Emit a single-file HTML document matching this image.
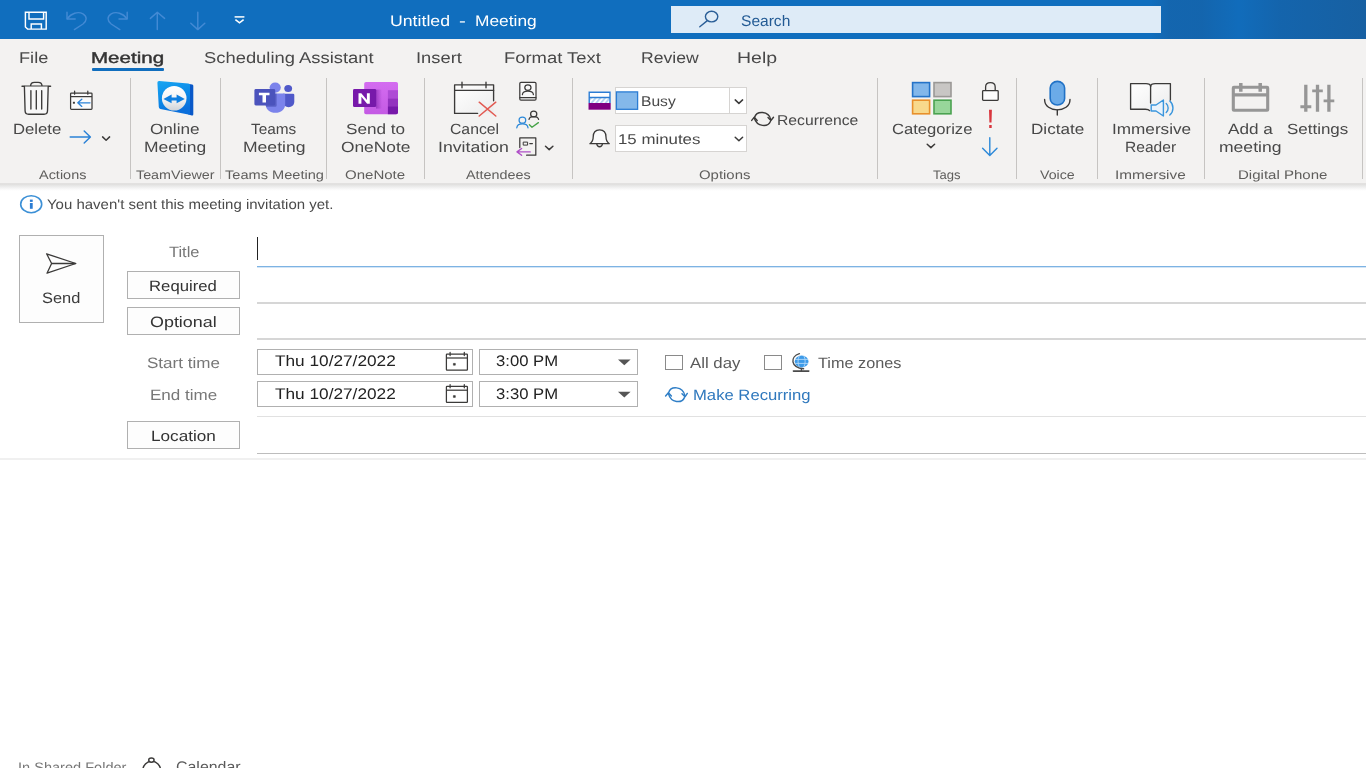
<!DOCTYPE html>
<html><head><meta charset="utf-8"><title>Untitled - Meeting</title>
<style>
html,body{margin:0;padding:0;background:#ffffff;}
body{width:1366px;height:768px;overflow:hidden;font-family:"Liberation Sans",sans-serif;}
#app{position:relative;width:1366px;height:768px;overflow:hidden;background:#ffffff;}
.t{position:absolute;white-space:pre;transform-origin:0 0;text-rendering:geometricPrecision;}
.b{position:absolute;box-sizing:border-box;}
.sep{position:absolute;width:1px;top:78px;height:101px;background:#c6c4c2;}
.btn{position:absolute;box-sizing:border-box;border:1px solid #b0b0b0;background:#fdfdfd;}
.ln{position:absolute;height:1px;}
#txt{position:absolute;left:0;top:0;width:1366px;height:768px;will-change:transform;}

</style></head>
<body>
<div id="app">
<!-- title bar -->
<div class="b" style="left:0;top:0;width:1366px;height:39px;background:#106ebe;"></div>
<div class="b" style="left:1150px;top:0;width:216px;height:39px;background:linear-gradient(90deg,rgba(21,98,168,0) 0%,rgba(21,98,168,0.7) 9%,rgba(21,98,168,0.75) 24%,rgba(19,104,180,0.3) 41%,rgba(21,98,168,0.8) 60%,rgba(23,96,162,1) 100%);"></div>
<div class="b" style="left:671px;top:6px;width:490px;height:27px;background:#deebf7;"></div>
<!-- ribbon bg -->
<div class="b" style="left:0;top:39px;width:1366px;height:144px;background:#f3f2f1;"></div>
<div class="b" style="left:0;top:183px;width:1366px;height:8px;background:linear-gradient(180deg,#e4e3e2 0%,#dfdedd 14%,#e6e6e5 30%,#f0f0f0 55%,#fafafa 80%,#ffffff 100%);"></div>
<!-- active tab underline -->
<div class="b" style="left:92px;top:68px;width:72px;height:3px;background:#106ebe;border-radius:1px;"></div>
<!-- group separators -->
<div class="sep" style="left:130px"></div>
<div class="sep" style="left:220px"></div>
<div class="sep" style="left:326px"></div>
<div class="sep" style="left:424px"></div>
<div class="sep" style="left:572px"></div>
<div class="sep" style="left:877px"></div>
<div class="sep" style="left:1016px"></div>
<div class="sep" style="left:1097px"></div>
<div class="sep" style="left:1204px"></div>
<div class="sep" style="left:1362px"></div>
<!-- combos -->
<div class="b" style="left:615px;top:87px;width:132px;height:27px;background:#ffffff;border:1px solid #d6d4d2;"></div>
<div class="b" style="left:729px;top:88px;width:1px;height:25px;background:#d6d4d2;"></div>
<div class="b" style="left:615px;top:125px;width:132px;height:27px;background:#ffffff;border:1px solid #d6d4d2;"></div>
<!-- form -->
<div class="btn" style="left:19px;top:235px;width:85px;height:88px;"></div>
<div class="btn" style="left:127px;top:271px;width:113px;height:28px;"></div>
<div class="btn" style="left:127px;top:307px;width:113px;height:28px;"></div>
<div class="btn" style="left:127px;top:421px;width:113px;height:28px;"></div>
<div class="b" style="left:257px;top:237px;width:1px;height:23px;background:#222;"></div>
<div class="ln" style="left:257px;top:266px;width:1109px;height:2px;background:linear-gradient(180deg,#7db3e3 0,#7db3e3 50%,#d3e5f6 50%,#d3e5f6 100%);"></div>
<div class="ln" style="left:257px;top:302px;width:1109px;height:2px;background:#d6d6d6;"></div>
<div class="ln" style="left:257px;top:338px;width:1109px;height:2px;background:#d6d6d6;"></div>
<div class="ln" style="left:257px;top:416px;width:1109px;background:#e1e1e1;"></div>
<div class="ln" style="left:257px;top:453px;width:1109px;background:#bdbdbd;"></div>
<div class="ln" style="left:0px;top:458px;width:1366px;height:2px;background:#f0f0f0;"></div>
<div class="btn" style="left:257px;top:349px;width:216px;height:26px;background:#fff;"></div>
<div class="btn" style="left:479px;top:349px;width:159px;height:26px;background:#fff;"></div>
<div class="btn" style="left:257px;top:381px;width:216px;height:26px;background:#fff;"></div>
<div class="btn" style="left:479px;top:381px;width:159px;height:26px;background:#fff;"></div>
<div class="b" style="left:665px;top:355px;width:18px;height:15px;background:#fff;border:1px solid #8a8a8a;"></div>
<div class="b" style="left:764px;top:355px;width:18px;height:15px;background:#fff;border:1px solid #8a8a8a;"></div>

<svg class="b" style="left:0;top:0" width="1366" height="768" viewBox="0 0 1366 768" fill="none">
<!-- ===== title bar ===== -->
<g stroke="#ffffff" stroke-width="1.45" stroke-linejoin="miter" stroke-linecap="butt">
  <!-- save -->
  <path d="M25.4 12.3 H46.2 V29.1 H27.6 L25.4 27 Z"/>
  <path d="M29 12.3 V19 H43.6 V12.3"/>
  <path d="M31.2 29.1 V24 H41.4 V29.1"/>
  <!-- customize QAT -->
  <path d="M234.6 16.9 H244.4" stroke-width="1.5"/>
  <path d="M235.4 19.6 L239.5 22.8 L243.6 19.6" stroke-width="1.6"/>
</g>
<g stroke="#438ad4" stroke-width="1.45" stroke-linecap="round" stroke-linejoin="round">
  <!-- undo -->
  <path d="M67 12.2 V18.9 H75.2"/>
  <path d="M67.5 18.5 C71 13.2 78 11.2 83 13.8 C87.4 16.4 87 21 83 24 L74.4 29.6"/>
  <!-- redo -->
  <path d="M127.2 12.2 V18.9 H119"/>
  <path d="M126.7 18.5 C123.2 13.2 116.2 11.2 111.2 13.8 C106.8 16.4 107.2 21 111.2 24 L119.8 29.6"/>
  <!-- up -->
  <path d="M157.3 29.6 V12.4 M150.4 18.4 L157.3 12.2 L164.6 18.4"/>
  <!-- down -->
  <path d="M197.8 12.2 V29.4 M190.8 23.2 L197.8 29.6 L204.8 23.2"/>
</g>
<!-- search icon -->
<g stroke="#2a5e97" stroke-width="1.4" stroke-linecap="round">
  <ellipse cx="711.6" cy="16.6" rx="6.2" ry="5.3"/>
  <path d="M707 20.9 L699.8 26.8"/>
</g>

<defs>
  <linearGradient id="tvg" x1="0" y1="0" x2="0.3" y2="1"><stop offset="0" stop-color="#18a6f2"/><stop offset="0.55" stop-color="#0c8ae8"/><stop offset="1" stop-color="#0a6fdc"/></linearGradient>
  <linearGradient id="tvc" x1="0" y1="0" x2="0" y2="1"><stop offset="0" stop-color="#ffffff"/><stop offset="0.55" stop-color="#f4f4f4"/><stop offset="1" stop-color="#cfd3d8"/></linearGradient>
  <linearGradient id="calg" x1="0" y1="0" x2="1" y2="1"><stop offset="0" stop-color="#ffffff"/><stop offset="1" stop-color="#ececec"/></linearGradient>
  <linearGradient id="ong" x1="0" y1="0" x2="0" y2="1"><stop offset="0" stop-color="#d46cf0"/><stop offset="1" stop-color="#c45ae4"/></linearGradient>
  <linearGradient id="onsh" x1="0" y1="0" x2="1" y2="0"><stop offset="0" stop-color="#7a1fa8" stop-opacity="0.55"/><stop offset="1" stop-color="#7a1fa8" stop-opacity="0"/></linearGradient>
  <pattern id="hatch" width="3.6" height="3.6" patternUnits="userSpaceOnUse" patternTransform="rotate(40)"><rect width="3.6" height="3.6" fill="#ffffff"/><rect width="1.9" height="3.6" fill="#b5d4f2"/></pattern>
</defs>
<!-- ===== Actions ===== -->
<g stroke="#3b3a39" stroke-width="1.35" stroke-linecap="round" stroke-linejoin="round">
  <path d="M22 86.2 H50.6"/>
  <path d="M30.6 86 C30.6 83.4 32 82.4 34.4 82.4 H38.2 C40.6 82.4 42 83.4 42 86"/>
  <path d="M24.4 86.4 L25.1 111 C25.2 113.2 26.4 114.2 28.6 114.2 H44 C46.2 114.2 47.4 113.2 47.5 111 L48.2 86.4" fill="#f7f7f7"/>
  <path d="M30.9 90.6 V109 M36.3 90.6 V109 M41.7 90.6 V109"/>
</g>
<g stroke="#3b3a39" stroke-width="1.25" stroke-linejoin="round">
  <rect x="70.6" y="93" width="21.4" height="16.4" rx="0.8" fill="#fafafa"/>
  <path d="M70.6 96.6 H92"/>
  <path d="M74.6 91 V94.2 M87.8 91 V94.2" stroke-linecap="round"/>
</g>
<rect x="72.9" y="101.8" width="2" height="1.9" fill="#3b3a39"/>
<g stroke="#2b82d6" stroke-width="1.35" stroke-linecap="round" stroke-linejoin="round">
  <path d="M90 102.8 H78 M81.8 99.2 L77.8 102.8 L81.8 106.4"/>
  <path d="M70.2 137 H90.2 M84.2 131 L90.4 137 L84.2 143" stroke-width="1.45"/>
</g>
<path d="M102.6 136.9 L106.1 140.2 L109.6 136.9" stroke="#3b3a39" stroke-width="1.5" stroke-linecap="round" stroke-linejoin="round"/>
<!-- ===== TeamViewer ===== -->
<path d="M189.2 84 L192.2 84.4 Q193.3 84.6 193.3 85.8 V114.2 Q193.3 115.8 191.8 115.4 L188.4 114.6 Z" fill="#0858c8"/>
<path d="M159.2 81 L188.2 83.5 Q190 83.7 190 85.4 V113.2 Q190 115 188.3 114.6 L160.4 108.9 Q158.9 108.6 158.8 107 L157.4 82.8 Q157.3 80.9 159.2 81 Z" fill="url(#tvg)"/>
<ellipse cx="174.2" cy="98.3" rx="12.3" ry="12.3" fill="url(#tvc)"/>
<path d="M163.4 98.9 L171.6 94.6 V97.5 H176.6 V94.6 L184.8 98.9 L176.6 103.2 V100.4 H171.6 V103.2 Z" fill="#0f7fe0"/>
<!-- ===== Teams ===== -->
<ellipse cx="288.2" cy="88.4" rx="3.9" ry="3.5" fill="#5059c9"/>
<path d="M283 93.8 H293 Q294.3 93.8 294.3 95.1 V101.6 C294.3 105.2 291.6 107.3 288.6 107.3 C285.6 107.3 283 105.2 283 101.6 Z" fill="#5059c9"/>
<ellipse cx="275.2" cy="87.6" rx="5.6" ry="5.1" fill="#7b83eb"/>
<path d="M265.6 93.4 H283.8 Q285.2 93.4 285.2 94.8 V104 C285.2 109.4 280.8 112.8 275.4 112.8 C270 112.8 265.6 109.4 265.6 104 Z" fill="#7b83eb"/>
<path d="M265.6 93.4 H276.6 V105.4 Q276.6 106.8 275.2 106.8 H266.2 Q265.6 105.6 265.6 104 Z" fill="#3e46a8" opacity="0.55"/>
<rect x="254.4" y="89" width="20.8" height="16.4" rx="1.4" fill="#4b53bc"/>
<path d="M258.9 92.7 H269.5 V95.3 H266 V102.4 H262.5 V95.3 H258.9 Z" fill="#ffffff"/>
<!-- ===== OneNote ===== -->
<rect x="364.2" y="82" width="33.8" height="32.2" rx="1.8" fill="url(#ong)"/>
<rect x="387.9" y="90.2" width="10.1" height="8.2" fill="#ae4bd5"/>
<rect x="387.9" y="98.4" width="10.1" height="7.9" fill="#9332bf"/>
<path d="M387.9 106.3 H398 V112.4 Q398 114.2 396.2 114.2 H387.9 Z" fill="#7719aa"/>
<rect x="376" y="89.6" width="6" height="19" fill="url(#onsh)"/>
<rect x="353" y="89.1" width="23.2" height="18" rx="1.4" fill="#7719aa"/>
<path d="M358.5 103.7 V93.2 H361.3 L366.9 100.1 V93.2 H369.8 V103.7 H367.1 L361.4 96.7 V103.7 Z" fill="#ffffff"/>
<!-- ===== Attendees ===== -->
<path d="M454.6 84.8 H493.6 V113.4 H454.6 Z" fill="url(#calg)"/>
<g stroke="#3b3a39" stroke-width="1.35" stroke-linecap="round" stroke-linejoin="round">
  <path d="M477.6 113.4 H454.6 V84.8 H493.6 V100.8"/>
  <path d="M454.6 90.4 H493.6"/>
  <path d="M462 82.2 V87.8 M486 82.2 V87.8"/>
</g>
<path d="M479.2 102.2 L495.8 116 M495.8 102.2 L479.2 116" stroke="#e25a52" stroke-width="1.5" stroke-linecap="round"/>
<g stroke="#3b3a39" stroke-width="1.25" stroke-linecap="round" stroke-linejoin="round">
  <!-- address book -->
  <rect x="519.8" y="82.4" width="16.2" height="17.8" rx="1.2" fill="#f8f8f8"/>
  <path d="M519.9 97.5 H535.9"/>
  <ellipse cx="527.9" cy="87.6" rx="3.1" ry="2.8"/>
  <path d="M522.4 94.6 C522.8 90 533 90 533.4 94.6"/>
  <!-- check names dark person -->
  <ellipse cx="533.7" cy="114" rx="3.1" ry="2.9"/>
  <path d="M529 119.4 C529.6 115.6 537.8 115.6 538.6 119.4"/>
  <!-- response options -->
  <path d="M519.8 147.6 V137.9 H535.8 V155.2 H526.6"/>
  <rect x="523.6" y="142.1" width="4" height="3" stroke-width="1"/>
  <path d="M529.8 143.6 H532.4"/>
</g>
<g stroke="#2b88d8" stroke-width="1.3" stroke-linecap="round">
  <ellipse cx="522.4" cy="120.2" rx="3.3" ry="3"/>
  <path d="M516.8 127.8 C517.4 122.6 527.4 122.6 528 127.8"/>
</g>
<path d="M529.4 124.8 L532 127.2 L538.4 122.6" stroke="#45a347" stroke-width="1.35" stroke-linecap="round" stroke-linejoin="round"/>
<path d="M530.2 151.9 H517.2 M521.6 148.5 L517 151.9 L521.6 155.3" stroke="#b050c8" stroke-width="1.4" stroke-linecap="round" stroke-linejoin="round"/>
<path d="M545.5 146.3 L549.2 149.6 L552.9 146.3" stroke="#3b3a39" stroke-width="1.5" stroke-linecap="round" stroke-linejoin="round"/>
<!-- ===== Options ===== -->
<rect x="588.5" y="91.6" width="22.2" height="18" fill="#ffffff"/>
<rect x="589.2" y="97.6" width="20.8" height="5.4" fill="url(#hatch)"/>
<rect x="588.5" y="103" width="22.2" height="6.7" fill="#800080"/>
<path d="M589.2 103 V92.3 H610 V103 M589.2 97.5 H610" stroke="#2b7cd3" stroke-width="1.4"/>
<rect x="616.4" y="91.9" width="21.2" height="17.4" fill="#84b8ea" stroke="#2b7cd3" stroke-width="1.3"/>
<g stroke="#3b3a39" stroke-width="1.3" stroke-linecap="round" stroke-linejoin="round">
  <path d="M589.9 143.7 C592.4 142 593.2 140.4 593.2 137 C593.2 132.4 595.6 129.8 599.6 129.8 C603.6 129.8 606 132.4 606 137 C606 140.4 606.8 142 609.3 143.7 Z" fill="#fafafa"/>
  <path d="M596.8 144.2 C597.4 147.6 601.8 147.6 602.4 144.2"/>
  <!-- combo chevrons -->
  <path d="M735.2 99.9 L738.9 103.4 L742.6 99.9" stroke-width="1.5"/>
  <path d="M735.2 137.2 L738.9 140.7 L742.6 137.2" stroke-width="1.5"/>
</g>

<!-- ===== Recurrence ===== -->
<g stroke="#3b3a39" stroke-width="1.4" stroke-linecap="round" stroke-linejoin="round">
  <path d="M754.6 117.3 C756.6 110.6 768.6 110.6 770.8 119.6"/>
  <path d="M768 117.6 L770.9 120.5 L773.5 117.3"/>
  <path d="M770.4 121.5 C768 127.3 757 127.3 754.3 118"/>
  <path d="M751.7 120.4 L754.3 117.3 L757.2 120.4"/>
</g>
<!-- ===== Tags ===== -->
<rect x="912.6" y="82.6" width="17" height="14" fill="#83b7ea" stroke="#2573c8" stroke-width="1.6"/>
<rect x="934" y="82.6" width="17" height="14" fill="#c8c6c4" stroke="#9a9896" stroke-width="1.6"/>
<rect x="912.6" y="100.2" width="17" height="13.6" fill="#f8d98c" stroke="#e8902c" stroke-width="1.6"/>
<rect x="934" y="100.2" width="17" height="13.6" fill="#98d69a" stroke="#4aa250" stroke-width="1.6"/>
<path d="M927.2 144.3 L930.9 147.6 L934.6 144.3" stroke="#3b3a39" stroke-width="1.5" stroke-linecap="round" stroke-linejoin="round"/>
<g stroke="#3b3a39" stroke-width="1.3" stroke-linejoin="round">
  <path d="M985.6 90.4 V87 C985.6 83.8 987.6 82.6 990.4 82.6 C993.2 82.6 995.2 83.8 995.2 87 V90.4"/>
  <rect x="982.6" y="90.6" width="15.6" height="9.8" rx="0.8" fill="#fdfdfd"/>
</g>
<path d="M989 109.8 H991.9 L991.5 122.4 H989.4 Z" fill="#d9363e"/>
<rect x="989.2" y="125" width="2.5" height="3" fill="#d9363e"/>
<path d="M989.8 137.8 V155.2 M982.6 148.2 L989.8 155.4 L997 148.2" stroke="#2b88d8" stroke-width="1.4" stroke-linecap="round" stroke-linejoin="round"/>
<!-- ===== Voice ===== -->
<rect x="1050.2" y="81.4" width="14.4" height="23.6" rx="7.2" ry="6.6" fill="#6babe8" stroke="#2172c6" stroke-width="1.6"/>
<g stroke="#3b3a39" stroke-width="1.4" stroke-linecap="round">
  <path d="M1044.6 99.4 C1044.6 113.4 1070 113.4 1070 99.4"/>
  <path d="M1057.3 110 V115"/>
</g>
<!-- ===== Immersive reader ===== -->
<path d="M1130.6 83.6 H1146 C1148.6 83.6 1150.4 84.6 1150.6 86.2 C1150.8 84.6 1152.6 83.6 1155.2 83.6 H1170.4 V109.2 H1154 C1152 109.2 1150.8 110 1150.6 111 C1150.2 110 1149 109.2 1147 109.2 H1130.6 Z" fill="url(#calg)"/>
<g stroke="#3b3a39" stroke-width="1.35" stroke-linecap="round" stroke-linejoin="round">
  <path d="M1150.6 86.2 C1150.4 84.6 1148.6 83.6 1146 83.6 H1130.6 V109.2 H1145.4 C1147.6 109.2 1149 109.8 1149.6 110.6"/>
  <path d="M1150.6 86.2 C1150.8 84.6 1152.6 83.6 1155.2 83.6 H1170.4 V100"/>
  <path d="M1150.6 86.4 V103"/>
</g>
<g stroke="#3a96dd" stroke-width="1.4" stroke-linecap="round" stroke-linejoin="round">
  <path d="M1151.2 105 H1156 L1163.4 100 V116 L1156 111 H1151.2 Z" fill="#e9f3fc"/>
  <path d="M1166.2 103.4 C1168.8 105.8 1168.8 110.2 1166.2 112.6"/>
  <path d="M1169.8 101 C1174 104.6 1174 111.4 1169.8 115"/>
</g>
<!-- ===== Digital phone ===== -->
<g stroke="#969696" stroke-width="3.1" stroke-linejoin="round">
  <rect x="1233.3" y="87.3" width="34.4" height="23" rx="0.6"/>
  <path d="M1233.3 94.9 H1267.7"/>
  <path d="M1240.8 83 V91.8 M1260.2 83 V91.8" stroke-linecap="butt" stroke-width="3.5"/>
  <path d="M1305.8 84.8 V111.8 M1317.5 84.8 V111.8 M1328.9 84.8 V111.8" stroke-width="3.3"/>
  <path d="M1300.4 106.8 H1311.3 M1312.2 90.9 H1322.8 M1323.6 100.9 H1334.3" stroke-width="2.9"/>
</g>
<!-- ===== Form ===== -->
<ellipse cx="31.2" cy="204.2" rx="10.5" ry="8.5" stroke="#3c90d6" stroke-width="1.6"/>
<rect x="29.9" y="199.6" width="2.8" height="2.3" fill="#2b7cd3"/>
<rect x="29.9" y="203" width="2.8" height="5.8" fill="#2b7cd3"/>
<g stroke="#3b3a39" stroke-width="1.3" stroke-linejoin="round" stroke-linecap="round">
  <path d="M46.6 253.8 L75.8 263.5 L47 273.2 L51.6 263.5 Z"/>
  <path d="M51.6 263.5 H75.4"/>
</g>
<!-- date calendars -->
<g id="dcal" stroke="#3b3a39" stroke-width="1.25" stroke-linejoin="round">
  <rect x="446.4" y="354.2" width="21" height="16" rx="0.6"/>
  <path d="M446.4 358 H467.4"/>
  <path d="M450.1 352.4 V355.6 M464.3 352.4 V355.6" stroke-linecap="round"/>
  <rect x="453.4" y="363.4" width="1.9" height="1.8" fill="#3b3a39" stroke-width="0.6"/>
</g>
<g transform="translate(0 32.2)" stroke="#3b3a39" stroke-width="1.25" stroke-linejoin="round">
  <rect x="446.4" y="354.2" width="21" height="16" rx="0.6"/>
  <path d="M446.4 358 H467.4"/>
  <path d="M450.1 352.4 V355.6 M464.3 352.4 V355.6" stroke-linecap="round"/>
  <rect x="453.4" y="363.4" width="1.9" height="1.8" fill="#3b3a39" stroke-width="0.6"/>
</g>
<path d="M618 359.6 H630.6 L624.3 365.2 Z" fill="#555555"/>
<path d="M618 391.8 H630.6 L624.3 397.4 Z" fill="#555555"/>
<!-- globe -->
<ellipse cx="801.6" cy="361.4" rx="6.9" ry="6" fill="#3d9be9"/>
<g stroke="#bfe0fa" stroke-width="0.9" opacity="0.9">
  <path d="M795 359.4 H808.2 M795 363.4 H808.2"/>
  <path d="M799.4 355.6 C797.6 359 797.6 363.8 799.4 367.2 M803.8 355.6 C805.6 359 805.6 363.8 803.8 367.2"/>
</g>
<g stroke="#4a4a4a" stroke-width="1.4" stroke-linecap="round">
  <path d="M799.4 353.6 C789.8 356.6 790.4 367.6 803.6 368.8"/>
  <path d="M801.4 368.8 V370.8"/>
  <path d="M793.4 371.1 H808.8" stroke-width="1.6"/>
</g>
<!-- make recurring -->
<g stroke="#2f7ec6" stroke-width="1.45" stroke-linecap="round" stroke-linejoin="round">
  <path d="M668.6 392.6 C670.8 385.8 682.6 385.8 685 395.8"/>
  <path d="M682 393.8 L685 396.8 L687.3 393.4"/>
  <path d="M684.4 397.6 C682 403.4 671 403.4 668.4 393.6"/>
  <path d="M665.6 396 L668.4 392.7 L671.4 396"/>
</g>
<!-- bottom person icon -->
<g stroke="#3b3a39" stroke-width="1.4">
  <ellipse cx="151.7" cy="770.5" rx="8.9" ry="9.2"/>
  <ellipse cx="151.4" cy="760.1" rx="2.7" ry="2.1" fill="#ffffff"/>
</g>
</svg>

<div id="txt">
<div class="t" style="left:389.56px;top:14px;font-size:15.36px;line-height:15.36px;color:#ffffff;transform:scaleX(1.1518);">Untitled</div>
<div class="t" style="left:459.00px;top:14px;font-size:15.36px;line-height:15.36px;color:#ffffff;transform:scaleX(1.3333);">-</div>
<div class="t" style="left:474.59px;top:14px;font-size:15.36px;line-height:15.36px;color:#ffffff;transform:scaleX(1.1295);">Meeting</div>
<div class="t" style="left:740.94px;top:14px;font-size:15.36px;line-height:15.36px;color:#225a94;transform:scaleX(1.0128);">Search</div>
<div class="t" style="left:19.25px;top:51px;font-size:15.65px;line-height:15.65px;color:#484848;transform:scaleX(1.1613);">File</div>
<div class="t" style="left:91.39px;top:51px;font-size:15.65px;line-height:15.65px;color:#333333;transform:scaleX(1.3135);-webkit-text-stroke:0.4px #333333;">Meeting</div>
<div class="t" style="left:203.82px;top:51px;font-size:15.65px;line-height:15.65px;color:#484848;transform:scaleX(1.1749);">Scheduling Assistant</div>
<div class="t" style="left:415.94px;top:51px;font-size:15.65px;line-height:15.65px;color:#484848;transform:scaleX(1.1733);">Insert</div>
<div class="t" style="left:503.53px;top:51px;font-size:15.65px;line-height:15.65px;color:#484848;transform:scaleX(1.1765);">Format Text</div>
<div class="t" style="left:640.59px;top:51px;font-size:15.65px;line-height:15.65px;color:#484848;transform:scaleX(1.1260);">Review</div>
<div class="t" style="left:737.44px;top:51px;font-size:15.65px;line-height:15.65px;color:#484848;transform:scaleX(1.2463);">Help</div>
<div class="t" style="left:12.79px;top:123px;font-size:14.78px;line-height:14.78px;color:#484848;transform:scaleX(1.1313);">Delete</div>
<div class="t" style="left:150.43px;top:123px;font-size:14.78px;line-height:14.78px;color:#484848;transform:scaleX(1.1612);">Online</div>
<div class="t" style="left:143.82px;top:141px;font-size:14.78px;line-height:14.78px;color:#484848;transform:scaleX(1.1821);">Meeting</div>
<div class="t" style="left:251.24px;top:123px;font-size:14.78px;line-height:14.78px;color:#484848;transform:scaleX(1.0409);">Teams</div>
<div class="t" style="left:242.51px;top:141px;font-size:14.78px;line-height:14.78px;color:#484848;transform:scaleX(1.1881);">Meeting</div>
<div class="t" style="left:345.63px;top:123px;font-size:14.78px;line-height:14.78px;color:#484848;transform:scaleX(1.1616);">Send to</div>
<div class="t" style="left:340.62px;top:141px;font-size:14.78px;line-height:14.78px;color:#484848;transform:scaleX(1.1740);">OneNote</div>
<div class="t" style="left:450.00px;top:123px;font-size:14.78px;line-height:14.78px;color:#484848;transform:scaleX(1.0667);">Cancel</div>
<div class="t" style="left:438.20px;top:141px;font-size:14.78px;line-height:14.78px;color:#484848;transform:scaleX(1.1982);">Invitation</div>
<div class="t" style="left:641.12px;top:95px;font-size:14.20px;line-height:14.20px;color:#484848;transform:scaleX(1.1008);">Busy</div>
<div class="t" style="left:618.11px;top:133px;font-size:14.20px;line-height:14.20px;color:#484848;transform:scaleX(1.1868);">15 minutes</div>
<div class="t" style="left:776.92px;top:114px;font-size:14.20px;line-height:14.20px;color:#484848;transform:scaleX(1.1077);">Recurrence</div>
<div class="t" style="left:891.66px;top:123px;font-size:14.78px;line-height:14.78px;color:#484848;transform:scaleX(1.1257);">Categorize</div>
<div class="t" style="left:1030.65px;top:123px;font-size:14.78px;line-height:14.78px;color:#484848;transform:scaleX(1.1568);">Dictate</div>
<div class="t" style="left:1111.55px;top:123px;font-size:14.78px;line-height:14.78px;color:#484848;transform:scaleX(1.1623);">Immersive</div>
<div class="t" style="left:1125.38px;top:141px;font-size:14.78px;line-height:14.78px;color:#484848;transform:scaleX(1.0553);">Reader</div>
<div class="t" style="left:1228.00px;top:123px;font-size:14.78px;line-height:14.78px;color:#484848;transform:scaleX(1.1610);">Add a</div>
<div class="t" style="left:1218.51px;top:141px;font-size:14.78px;line-height:14.78px;color:#484848;transform:scaleX(1.1881);">meeting</div>
<div class="t" style="left:1286.64px;top:123px;font-size:14.78px;line-height:14.78px;color:#484848;transform:scaleX(1.1481);">Settings</div>
<div class="t" style="left:39.20px;top:169px;font-size:12.46px;line-height:12.46px;color:#5f5e5c;transform:scaleX(1.1605);">Actions</div>
<div class="t" style="left:135.51px;top:169px;font-size:12.46px;line-height:12.46px;color:#5f5e5c;transform:scaleX(1.1498);">TeamViewer</div>
<div class="t" style="left:224.51px;top:169px;font-size:12.46px;line-height:12.46px;color:#5f5e5c;transform:scaleX(1.1712);">Teams Meeting</div>
<div class="t" style="left:345.10px;top:169px;font-size:12.46px;line-height:12.46px;color:#5f5e5c;transform:scaleX(1.2062);">OneNote</div>
<div class="t" style="left:465.80px;top:169px;font-size:12.46px;line-height:12.46px;color:#5f5e5c;transform:scaleX(1.1516);">Attendees</div>
<div class="t" style="left:699.10px;top:169px;font-size:12.46px;line-height:12.46px;color:#5f5e5c;transform:scaleX(1.1976);">Options</div>
<div class="t" style="left:933.04px;top:169px;font-size:12.46px;line-height:12.46px;color:#5f5e5c;transform:scaleX(1.0471);">Tags</div>
<div class="t" style="left:1040.00px;top:169px;font-size:12.46px;line-height:12.46px;color:#5f5e5c;transform:scaleX(1.1400);">Voice</div>
<div class="t" style="left:1115.16px;top:169px;font-size:12.46px;line-height:12.46px;color:#5f5e5c;transform:scaleX(1.2306);">Immersive</div>
<div class="t" style="left:1238.49px;top:169px;font-size:12.46px;line-height:12.46px;color:#5f5e5c;transform:scaleX(1.2069);">Digital Phone</div>
<div class="t" style="left:47.46px;top:198px;font-size:13.91px;line-height:13.91px;color:#4a4a4a;transform:scaleX(1.0777);">You haven&#x27;t sent this meeting invitation yet.</div>
<div class="t" style="left:42.18px;top:291px;font-size:15.07px;line-height:15.07px;color:#3a3a3a;transform:scaleX(1.0896);">Send</div>
<div class="t" style="left:168.53px;top:245px;font-size:15.07px;line-height:15.07px;color:#777777;transform:scaleX(1.0926);">Title</div>
<div class="t" style="left:148.61px;top:279px;font-size:15.07px;line-height:15.07px;color:#333333;transform:scaleX(1.1102);">Required</div>
<div class="t" style="left:149.61px;top:315px;font-size:15.07px;line-height:15.07px;color:#333333;transform:scaleX(1.1889);">Optional</div>
<div class="t" style="left:147.15px;top:356px;font-size:15.07px;line-height:15.07px;color:#777777;transform:scaleX(1.1317);">Start time</div>
<div class="t" style="left:149.89px;top:388px;font-size:15.07px;line-height:15.07px;color:#777777;transform:scaleX(1.1304);">End time</div>
<div class="t" style="left:150.58px;top:429px;font-size:15.07px;line-height:15.07px;color:#333333;transform:scaleX(1.1379);">Location</div>
<div class="t" style="left:275.22px;top:354px;font-size:15.36px;line-height:15.36px;color:#222222;transform:scaleX(1.1221);">Thu 10/27/2022</div>
<div class="t" style="left:275.22px;top:387px;font-size:15.36px;line-height:15.36px;color:#222222;transform:scaleX(1.1221);">Thu 10/27/2022</div>
<div class="t" style="left:496.19px;top:354px;font-size:15.36px;line-height:15.36px;color:#222222;transform:scaleX(1.0860);">3:00 PM</div>
<div class="t" style="left:496.19px;top:387px;font-size:15.36px;line-height:15.36px;color:#222222;transform:scaleX(1.0860);">3:30 PM</div>
<div class="t" style="left:690.00px;top:356px;font-size:15.07px;line-height:15.07px;color:#5a5a5a;transform:scaleX(1.1160);">All day</div>
<div class="t" style="left:817.73px;top:356px;font-size:15.07px;line-height:15.07px;color:#5a5a5a;transform:scaleX(1.0784);">Time zones</div>
<div class="t" style="left:692.92px;top:388px;font-size:15.07px;line-height:15.07px;color:#2f78bd;transform:scaleX(1.1058);">Make Recurring</div>
<div class="t" style="left:18.18px;top:761px;font-size:13.77px;line-height:13.77px;color:#777777;transform:scaleX(1.0574);">In Shared Folder</div>
<div class="t" style="left:176.22px;top:760px;font-size:15.36px;line-height:15.36px;color:#5a5a5a;transform:scaleX(1.0367);">Calendar</div>
</div>
</div>
</body></html>
